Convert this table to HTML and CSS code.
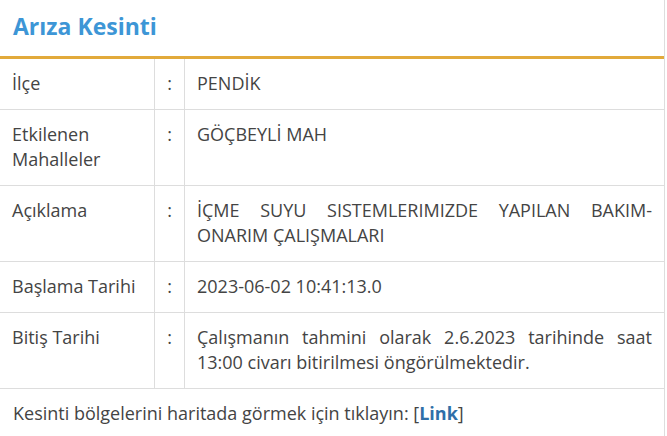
FILE: index.html
```html
<!DOCTYPE html>
<html lang="tr">
<head>
  <meta charset="UTF-8">
  <meta name="viewport" content="width=device-width, initial-scale=1.0">
  <title>Arıza Kesinti</title>
  <link rel="stylesheet" href="styles.css">
</head>
<body>

  <div class="panel">
    <h2 class="panel-title">Arıza Kesinti</h2>

    <table class="info-table">
      <tr>
        <td class="label">İlçe</td>
        <td class="sep">:</td>
        <td class="value">PENDİK</td>
      </tr>
      <tr>
        <td class="label">Etkilenen Mahalleler</td>
        <td class="sep">:</td>
        <td class="value">GÖÇBEYLİ MAH</td>
      </tr>
      <tr>
        <td class="label">Açıklama</td>
        <td class="sep">:</td>
        <td class="value">İÇME SUYU SISTEMLERIMIZDE YAPILAN BAKIM-ONARIM ÇALIŞMALARI</td>
      </tr>
      <tr>
        <td class="label">Başlama Tarihi</td>
        <td class="sep">:</td>
        <td class="value">2023-06-02 10:41:13.0</td>
      </tr>
      <tr>
        <td class="label">Bitiş Tarihi</td>
        <td class="sep">:</td>
        <td class="value">Çalışmanın tahmini olarak 2.6.2023 tarihinde saat 13:00 civarı bitirilmesi öngörülmektedir.</td>
      </tr>
    </table>

    <p class="map-note">Kesinti bölgelerini haritada görmek için tıklayın: [<a href="#">Link</a>]</p>
  </div>

</body>
</html>
```

FILE: styles.css
```css
body {
  font-family: 'Open Sans', sans-serif;
  margin: 0;
  padding: 0;
  background-color: #fff;
  color: #444;
}
.panel {
  width: 664px;
  border-right: 1px solid #ddd;
}
.panel-title {
  margin: 0;
  padding: 11px 13px 0;
  box-sizing: border-box;
  height: 59px;
  border-bottom: 3px solid #e2aa3b;
  font-size: 23px;
  line-height: 31px;
  font-weight: 700;
  color: #3d96d6;
}
.info-table {
  width: 100%;
  border-collapse: collapse;
}
.info-table td {
  padding: 12px 12px 13px;
  font-size: 18px;
  line-height: 25px;
  vertical-align: top;
  border-bottom: 1px solid #ddd;
}
.label {
  width: 130px;
  border-right: 1px solid #ddd;
}
.sep {
  width: 5px;
  text-align: center;
  border-right: 1px solid #ddd;
}
.value {
  text-align: justify;
}
.map-note {
  margin: 0;
  padding: 12px 13px 13px;
  font-size: 18px;
  line-height: 25px;
}
.map-note a {
  color: #2f6fa8;
  font-weight: 700;
  text-decoration: none;
}
```
